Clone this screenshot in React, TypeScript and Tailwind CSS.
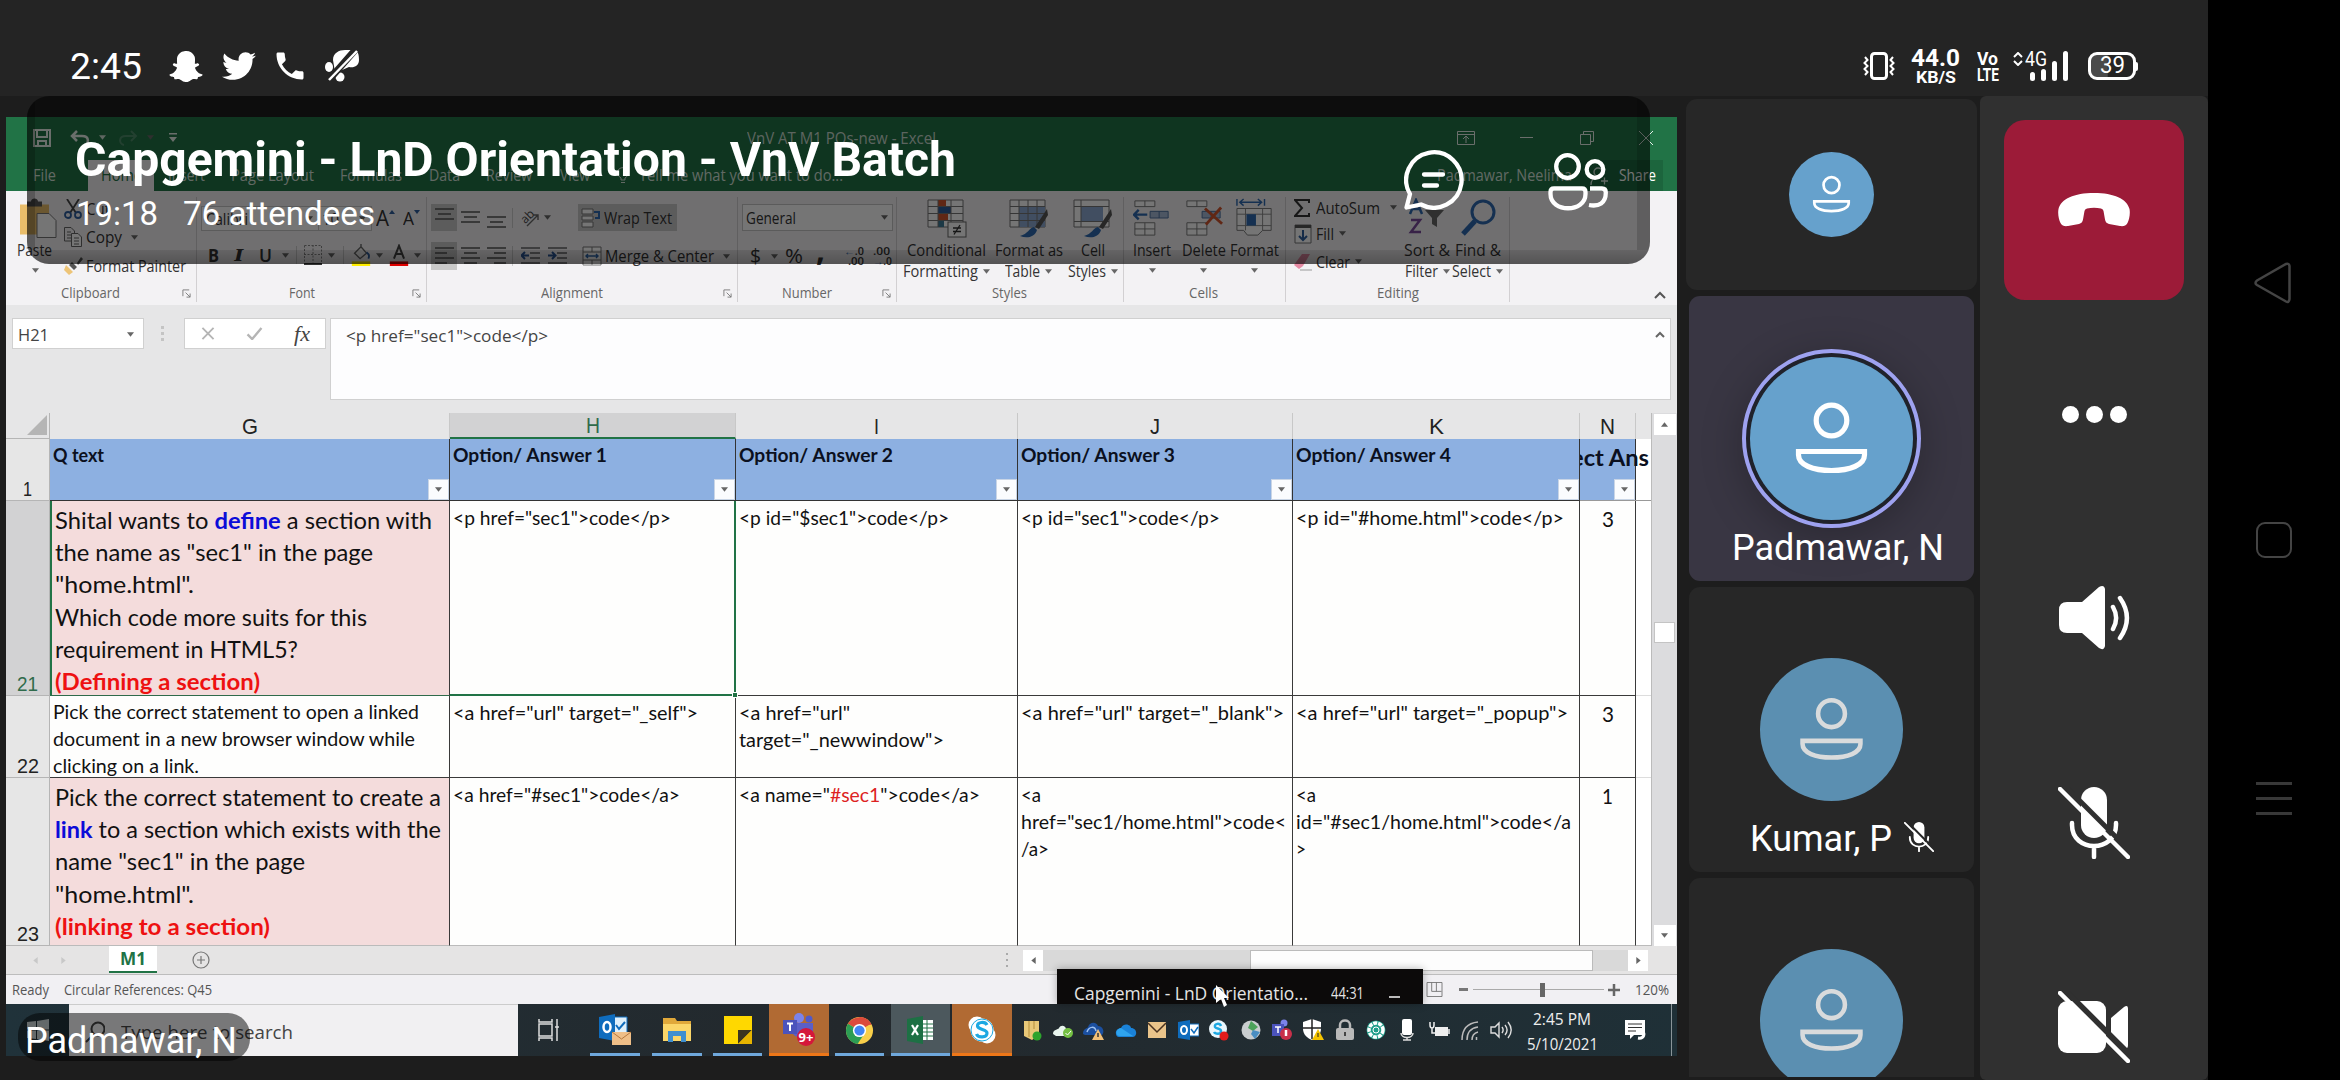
import React, { useLayoutEffect, useRef, useState } from 'react';
import { FaSnapchatGhost, FaTwitter } from 'react-icons/fa';
import { MdPhone } from 'react-icons/md';

type Kids = { children?: React.ReactNode; className?: string };

/* A single line of text stretched horizontally to fill the width of its box. */
function T({ children, className = '' }: Kids) {
  const outer = useRef<HTMLSpanElement>(null);
  const inner = useRef<HTMLSpanElement>(null);
  const [k, setK] = useState(1);
  useLayoutEffect(() => {
    if (outer.current && inner.current) {
      setK(outer.current.clientWidth / inner.current.getBoundingClientRect().width);
    }
  }, []);
  return (
    <span ref={outer} className={'block shrink-0 whitespace-nowrap ' + className}>
      <span ref={inner} className="inline-block origin-left" style={{ transform: `scaleX(${k})` }}>
        {children}
      </span>
    </span>
  );
}

function Caret({ className = '' }: { className?: string }) {
  return (
    <svg viewBox="0 0 8 5" className={'h-[5px] w-[7px] shrink-0 fill-[#666] ' + className}>
      <path d="M0 0H8L4 5Z" />
    </svg>
  );
}

function Launcher({ className = '' }: { className?: string }) {
  return (
    <svg viewBox="0 0 10 10" className={'h-[9px] w-[9px] shrink-0 fill-none stroke-[#777] ' + className}>
      <path d="M1 8V1H8M4 4L9 9M9 5V9H5" />
    </svg>
  );
}

function Group({ children, label, labelClass, className = '', launcher = true }: Kids & { label: string; labelClass: string; launcher?: boolean }) {
  return (
    <div className={'relative flex h-[105px] shrink-0 flex-col border-r border-[#d2d0d2] ' + className}>
      <div className="flex h-[89px]">{children}</div>
      <div className="flex h-[18px] items-center text-[14.500px] leading-[18px] text-[#666]">
        <T className={labelClass}>{label}</T>
        {launcher && <Launcher className="mr-[5px] ml-auto" />}
      </div>
    </div>
  );
}

const iconBase = 'shrink-0 fill-none';

function Lines({ kind, className = '' }: { kind: 'top' | 'mid' | 'bot' | 'left' | 'center' | 'right'; className?: string }) {
  const d = {
    top: 'M0 2H19M3 7H16M0 12H19',
    mid: 'M0 5H19M3 10H16M0 15H19',
    bot: 'M0 10H19M3 15H16M0 20H19',
    left: 'M0 2H19M0 7H12M0 12H19M0 17H12',
    center: 'M0 2H19M3 7H16M0 12H19M3 17H16',
    right: 'M0 2H19M7 7H19M0 12H19M7 17H19',
  }[kind];
  return (
    <svg viewBox="0 0 19 21" className={iconBase + ' h-[21px] w-[19px] stroke-[#555] stroke-[1.4] ' + className}>
      <path d={d} />
    </svg>
  );
}

function Indent({ flip = false, className = '' }: { flip?: boolean; className?: string }) {
  return (
    <svg viewBox="0 0 19 20" className={iconBase + ' h-[20px] w-[19px] ' + className}>
      <path d="M0 2H19M9 7H19M9 12H19M0 17H19" stroke="#666" strokeWidth="1.4" />
      <path d={flip ? 'M0 9.5H7M4 6L7.5 9.5L4 13' : 'M8 9.5H1M4 6L.5 9.5L4 13'} stroke="#2b579a" strokeWidth="2" />
    </svg>
  );
}

function TableIcon({ kind }: { kind: 'cond' | 'table' | 'cell' }) {
  return (
    <svg viewBox="0 0 40 40" className={iconBase + ' h-[40px] w-[40px]'}>
      <path d="M1 2H36V29H1Z" fill="#fff" stroke="#777" />
      {kind === 'cond' && (
        <>
          <rect x="11" y="2" width="8" height="6" fill="#d2562f" />
          <rect x="11" y="9" width="13" height="6" fill="#2f5f9e" />
          <rect x="11" y="16" width="10" height="6" fill="#d2562f" />
          <rect x="11" y="22" width="6" height="7" fill="#3d7d9a" />
          <path d="M1 8.5H36M1 15.5H36M1 22.5H36M11 2V29M24 2V29" stroke="#777" />
          <rect x="21" y="24" width="18" height="15" fill="#fff" stroke="#666" />
          <path d="M26 30H34M26 33.5H34M33 27L27 36.500" stroke="#333" strokeWidth="1.3" />
        </>
      )}
      {kind === 'table' && (
        <>
          <rect x="10" y="9" width="26" height="20" fill="#8fabd3" />
          <path d="M1 8.500H36M1 15.500H36M1 22.500H36M10 2V29M19 2V29M28 2V29" stroke="#777" />
        </>
      )}
      {kind === 'cell' && (
        <>
          <rect x="8" y="9" width="22" height="14" fill="#8fabd3" />
          <path d="M1 8.500H36M8 2V29M1 23.500H36" stroke="#777" />
        </>
      )}
      {kind !== 'cond' && (
        <>
          <path d="M38 11L26 29L30 31L39 17Z" fill="#555" />
          <path d="M25 29C20 30 19 36 11 38C18 41 26 39 28 32Z" fill="#2f6ab0" />
        </>
      )}
    </svg>
  );
}

function CellIcon({ kind }: { kind: 'insert' | 'delete' | 'format' }) {
  return (
    <svg viewBox="0 0 40 40" className={iconBase + ' h-[40px] w-[38px]'}>
      {kind === 'format' ? (
        <>
          <path d="M1 0V7M30 0V7M4 3.500H27M8 0L4 3.500L8 7M23 0L27 3.500L23 7" stroke="#2f6ab0" strokeWidth="1.500" />
          <path d="M1 10H37V33H28L23 38H12L8 33H1Z" fill="#fff" stroke="#777" />
          <path d="M1 16H37M1 28H37M10 10V33M28 10V33" stroke="#888" />
          <rect x="11" y="16" width="10" height="12" fill="#2f6ab0" />
        </>
      ) : (
        <>
          <path d="M2 2H23V8H2ZM12.500 2V8M2 25H23V38H2ZM12.500 25V38M2 31.500H23" fill="#fff" stroke="#777" />
          <path d="M18 13H37V20H18ZM27.500 13V20" fill="#a9bcd8" stroke="#4b6f9f" />
          {kind === 'insert' ? (
            <path d="M15 16.500H1M6 11.500L1 16.500L6 21.500" stroke="#2f6ab0" strokeWidth="2.500" />
          ) : (
            <path d="M21 10L39 26M38 9L22 27" stroke="#d2562f" strokeWidth="3" />
          )}
        </>
      )}
    </svg>
  );
}

function BigButton({ icon, a, b, className, wa, wb }: { icon: React.ReactNode; a: string; b?: string; className: string; wa: string; wb?: string }) {
  return (
    <div className={'flex shrink-0 flex-col items-center pt-[1px] text-[16px] leading-[20px] text-[#333] ' + className}>
      {icon}
      <T className={'mt-[2px] h-[20px] ' + wa}>{a}</T>
      {b ? (
        <div className="flex h-[22px] items-center gap-[5px]">
          <T className={wb}>{b}</T>
          <Caret />
        </div>
      ) : (
        <Caret className="mt-[8px]" />
      )}
    </div>
  );
}

function TitleBar() {
  return (
    <div className="flex h-[37px] items-center bg-[#217346] pt-[4px] text-[16px] text-[#e6efe9]">
      <svg viewBox="0 0 18 18" className={iconBase + ' ml-[27px] h-[18px] w-[18px] stroke-current stroke-2'}>
        <path d="M1 1H17V17H1ZM4 1V8H14V1M5 17V12H13V17" />
      </svg>
      <svg viewBox="0 0 20 16" className={iconBase + ' ml-[19px] h-[16px] w-[20px] stroke-current stroke-[2.500]'}>
        <path d="M7 1L2 6L7 11M2 6H12C20 6 19 14 14 15" />
      </svg>
      <Caret className="ml-[9px] fill-[#cfe0d6]" />
      <svg viewBox="0 0 20 16" className={iconBase + ' ml-[12px] h-[16px] w-[20px] stroke-[#4d8c69] stroke-2'}>
        <path d="M13 1L18 6L13 11M18 6H8C0 6 1 14 6 15" />
      </svg>
      <Caret className="ml-[9px] fill-[#4d8c69]" />
      <svg viewBox="0 0 8 9" className="ml-[15px] h-[9px] w-[8px] shrink-0 fill-current">
        <path d="M0 0H8V1.500H0ZM0 4H8L4 9Z" />
      </svg>
      <T className="ml-[570px] w-[189px] text-[#c9dbd0]">VnV AT M1 PQs-new - Excel</T>
      <svg viewBox="0 0 18 14" className={iconBase + ' ml-[521px] h-[14px] w-[18px] stroke-current'}>
        <path d="M.5 .5H17.500V13.500H.5ZM.5 3.500H17.500M9 12V5M6 8L9 5L12 8" />
      </svg>
      <span className="ml-[45px] h-px w-[13px] bg-current" />
      <svg viewBox="0 0 14 14" className={iconBase + ' ml-[47px] h-[14px] w-[14px] stroke-current'}>
        <path d="M.5 3.500H10.500V13.500H.5ZM3.500 3.500V.5H13.500V10.500H10.500" />
      </svg>
      <svg viewBox="0 0 14 14" className={iconBase + ' ml-[45px] h-[14px] w-[14px] stroke-current'}>
        <path d="M0 0L14 14M14 0L0 14" />
      </svg>
    </div>
  );
}

function MenuTabs() {
  return (
    <div className="flex h-[37px] items-end bg-[#217346] text-[16px] leading-[31px] text-[#d5e4db]">
      <T className="ml-[27px] w-[23px]">File</T>
      <div className="ml-[32px] flex h-[31px] w-[66px] justify-center bg-[#f3f2f4] text-[#217346]">
        <T className="w-[41px]">Home</T>
      </div>
      <T className="ml-[14px] w-[37px]">Insert</T>
      <T className="ml-[26px] w-[83px]">Page Layout</T>
      <T className="ml-[26px] w-[62px]">Formulas</T>
      <T className="ml-[27px] w-[31px]">Data</T>
      <T className="ml-[26px] w-[46px]">Review</T>
      <T className="ml-[28px] w-[30px]">View</T>
      <svg viewBox="0 0 12 18" className={iconBase + ' mb-[6px] ml-[27px] h-[18px] w-[12px] stroke-current'}>
        <path d="M4 13V11C1 9 .5 7 .5 5.500C.5-1 11.500-1 11.500 5.500C11.500 7 11 9 8 11V13ZM4 15.500H8" />
      </svg>
      <T className="ml-[10px] w-[204px]">Tell me what you want to do...</T>
      <T className="ml-[594px] w-[135px]">Padmawar, Neelima</T>
      <div className="ml-[8px] flex h-[31px] w-[83px] items-center bg-[#1c653d]">
        <svg viewBox="0 0 20 18" className={iconBase + ' ml-[9px] h-[18px] w-[20px] stroke-current stroke-[1.300]'}>
          <circle cx="9" cy="5" r="4" />
          <path d="M2 18C2 13 5 10 9 10M12 14H19M15.500 10.500V17.500" />
        </svg>
        <T className="ml-[10px] w-[37px] text-white">Share</T>
      </div>
    </div>
  );
}

function Ribbon() {
  return (
    <div className="flex h-[114px] items-start bg-[#f3f2f4] pt-[6px] text-[16px] text-[#333]">
      <Group label="Clipboard" labelClass="ml-[55px] w-[59px]" className="w-[191px]">
        <div className="flex w-[58px] flex-col items-center">
          <svg viewBox="0 0 37 40" className={iconBase + ' mt-[1px] ml-[6px] h-[41px] w-[37px]'}>
            <path d="M0 6H29V36H0Z" fill="#e9bd6a" />
            <path d="M7 3H11C11-1 18-1 18 3H22V8H7Z" fill="#555" />
            <path d="M17 15H29L36 22V39H17Z" fill="#fff" stroke="#777" />
          </svg>
          <T className="mt-[1px] ml-[-1px] w-[35px] leading-[20px]">Paste</T>
          <Caret className="mt-[8px]" />
        </div>
        <div className="flex flex-col">
          <div className="flex h-[24px] items-center">
            <svg viewBox="0 0 18 20" className={iconBase + ' h-[20px] w-[18px] stroke-[#444] stroke-[1.800]'}>
              <path d="M3 0L12 14M15 0L6 14" />
              <circle cx="4" cy="16" r="3" stroke="#2f5f9e" />
              <circle cx="14" cy="16" r="3" stroke="#2f5f9e" />
            </svg>
            <T className="ml-[4px] w-[24px]">Cut</T>
          </div>
          <div className="flex h-[32px] items-center">
            <svg viewBox="0 0 18 20" className={iconBase + ' h-[20px] w-[18px] stroke-[#666]'}>
              <path d="M.5 .5H7L10.500 4V14H.5ZM3 5H7M3 8H7M3 11H7" />
              <path d="M7.500 6.500H14L17.500 10V19.500H7.500ZM10 11H15M10 14H15M10 17H15" fill="#fff" />
            </svg>
            <T className="ml-[4px] w-[36px]">Copy</T>
            <Caret className="ml-[9px]" />
          </div>
          <div className="flex h-[26px] items-center">
            <svg viewBox="0 0 19 18" className={iconBase + ' h-[18px] w-[19px]'}>
              <path d="M2 8L9 15L5 18L0 13Z" fill="#edc477" />
              <path d="M8 5L13 10L10 13L5 8ZM13 6L17 0L19 2L14 8Z" fill="#555" />
            </svg>
            <T className="ml-[3px] w-[100px]">Format Painter</T>
          </div>
        </div>
      </Group>

      <Group label="Font" labelClass="ml-[92px] w-[26px]" className="w-[230px]">
        <div className="flex flex-col pt-[9px] pl-[4px]">
          <div className="flex h-[25px] items-center">
            <div className="flex h-[25px] w-[118px] items-center border border-[#c6c6c6] bg-white pr-[5px] pl-[4px]">
              <T className="w-[42px]">Calibri</T>
              <Caret className="ml-auto" />
            </div>
            <div className="flex h-[25px] w-[53px] items-center border border-l-0 border-[#c6c6c6] bg-white pr-[5px] pl-[3px]">
              <T className="w-[17px]">10</T>
              <Caret className="ml-auto" />
            </div>
            <T className="ml-[4px] w-[13px] text-[21px]">A</T>
            <svg viewBox="0 0 6 4" className="mb-[14px] h-[4px] w-[6px] fill-[#2f5f9e]"><path d="M0 4H6L3 0Z" /></svg>
            <T className="ml-[8px] w-[11px] text-[18px]">A</T>
            <svg viewBox="0 0 6 4" className="mb-[14px] h-[4px] w-[6px] fill-[#2f5f9e]"><path d="M0 0H6L3 4Z" /></svg>
          </div>
          <div className="mt-[10px] flex h-[28px] items-center pl-[7px] text-[18px]">
            <T className="w-[11px] font-bold">B</T>
            <T className="ml-[15px] w-[9px] font-serif font-bold italic">I</T>
            <T className="ml-[16px] w-[13px] font-semibold underline">U</T>
            <Caret className="ml-[10px]" />
            <span className="ml-[7px] h-[18px] w-px bg-[#ccc]" />
            <svg viewBox="0 0 18 20" className={iconBase + ' ml-[7px] h-[20px] w-[18px]'}>
              <path d="M.5 .5H17.500V18M.5 .5V18M9 0V18M0 9.500H18" stroke="#888" strokeDasharray="2 1.500" />
              <path d="M0 19H18" stroke="#333" strokeWidth="2" />
            </svg>
            <Caret className="ml-[6px]" />
            <span className="ml-[8px] h-[18px] w-px bg-[#ccc]" />
            <svg viewBox="0 0 20 24" className={iconBase + ' ml-[7px] h-[22px] w-[20px]'}>
              <path d="M3 10L10 3L16 10L9 16ZM10 3V0" stroke="#666" strokeWidth="1.500" fill="#eee" />
              <path d="M16 9C19 11 19 14 18 16" stroke="#2f5f9e" strokeWidth="2" />
              <path d="M0 19H20V24H0Z" fill="#ffee00" />
            </svg>
            <Caret className="ml-[5px]" />
            <svg viewBox="0 0 20 24" className={iconBase + ' ml-[6px] h-[22px] w-[20px]'}>
              <path d="M4.500 16L10 2L15.500 16M7 11H13" stroke="#444" strokeWidth="2.200" />
              <path d="M0 19H20V24H0Z" fill="#e00000" />
            </svg>
            <Caret className="ml-[5px]" />
          </div>
        </div>
      </Group>

      <Group label="Alignment" labelClass="ml-[114px] w-[62px]" className="w-[311px]">
        <div className="flex flex-col pt-[7px] pl-[4px]">
          <div className="flex h-[27px] items-center">
            <div className="flex h-[27px] w-[26px] items-center justify-center bg-[#c9c9c9]"><Lines kind="top" /></div>
            <Lines kind="mid" className="ml-[4px]" />
            <Lines kind="bot" className="ml-[7px]" />
            <span className="ml-[6px] h-[20px] w-px bg-[#ccc]" />
            <svg viewBox="0 0 20 20" className={iconBase + ' ml-[7px] h-[20px] w-[20px]'}>
              <text x="1" y="14" transform="rotate(-45 6 10)" className="fill-[#444] text-[12px]">ab</text>
              <path d="M7 18L18 7M13 7H18V12" stroke="#666" strokeWidth="1.400" />
            </svg>
            <Caret className="ml-[4px]" />
            <div className="ml-[27px] flex h-[27px] w-[99px] items-center bg-[#c9c9c9]">
              <svg viewBox="0 0 20 20" className={iconBase + ' ml-[3px] h-[20px] w-[20px]'}>
                <path d="M1 1H12V6H1ZM1 8H12V12H1ZM1 14H12V19H1Z" fill="#fff" stroke="#777" />
                <path d="M13 4H18V10H14" stroke="#2f6ab0" strokeWidth="2" />
              </svg>
              <T className="ml-[3px] w-[68px]">Wrap Text</T>
            </div>
          </div>
          <div className="mt-[11px] flex h-[28px] items-center">
            <div className="flex h-[28px] w-[26px] items-center justify-center bg-[#c9c9c9]"><Lines kind="left" /></div>
            <Lines kind="center" className="ml-[4px]" />
            <Lines kind="right" className="ml-[7px]" />
            <span className="ml-[6px] h-[20px] w-px bg-[#ccc]" />
            <Indent className="ml-[8px]" />
            <Indent flip className="ml-[8px]" />
            <svg viewBox="0 0 20 20" className={iconBase + ' ml-[15px] h-[20px] w-[20px]'}>
              <path d="M1 1H19V19H1ZM1 6H19M1 14H19M10 1V6M10 14V19" stroke="#777" fill="#fff" />
              <path d="M4 10H16M6 8L4 10L6 12M14 8L16 10L14 12" stroke="#2f6ab0" strokeWidth="1.400" />
            </svg>
            <T className="ml-[3px] w-[109px]">Merge &amp; Center</T>
            <Caret className="ml-[9px]" />
          </div>
        </div>
      </Group>

      <Group label="Number" labelClass="ml-[44px] w-[50px]" className="w-[159px]">
        <div className="flex flex-col pt-[7px] pl-[4px]">
          <div className="flex h-[27px] w-[151px] items-center border border-[#c6c6c6] bg-white pr-[4px] pl-[3px]">
            <T className="w-[50px]">General</T>
            <Caret className="ml-auto" />
          </div>
          <div className="mt-[11px] flex h-[28px] items-center pl-[8px] text-[20px]">
            <T className="w-[11px]">$</T>
            <Caret className="ml-[10px]" />
            <T className="ml-[7px] w-[18px]">%</T>
            <T className="mt-[-12px] ml-[13px] w-[9px] text-[30px] leading-[28px] font-bold">,</T>
            <div className="ml-[19px] flex flex-col text-[10px] leading-[10px] font-semibold">
              <T className="w-[20px]"><b className="text-[#2f6ab0]">←</b>.0</T>
              <T className="ml-[4px] w-[16px]">.00</T>
            </div>
            <div className="ml-[9px] flex flex-col text-[10px] leading-[10px] font-semibold">
              <T className="w-[17px]">.00</T>
              <T className="w-[19px]"><b className="text-[#2f6ab0]">→</b>.0</T>
            </div>
          </div>
        </div>
      </Group>

      <Group label="Styles" labelClass="ml-[95px] w-[35px]" className="w-[227px]" launcher={false}>
        <BigButton className="ml-[6px] w-[87px]" icon={<TableIcon kind="cond" />} a="Conditional" wa="w-[79px]" b="Formatting" wb="w-[75px]" />
        <BigButton className="ml-[4px] w-[69px]" icon={<TableIcon kind="table" />} a="Format as" wa="w-[68px]" b="Table" wb="w-[35px]" />
        <BigButton className="ml-[4px] w-[51px]" icon={<TableIcon kind="cell" />} a="Cell" wa="w-[24px]" b="Styles" wb="w-[38px]" />
      </Group>

      <Group label="Cells" labelClass="ml-[65px] w-[29px]" className="w-[162px]" launcher={false}>
        <BigButton className="ml-[9px] w-[38px]" icon={<CellIcon kind="insert" />} a="Insert" wa="w-[38px]" />
        <BigButton className="ml-[10px] w-[45px]" icon={<CellIcon kind="delete" />} a="Delete" wa="w-[44px]" />
        <BigButton className="ml-[4px] w-[49px]" icon={<CellIcon kind="format" />} a="Format" wa="w-[49px]" />
      </Group>

      <Group label="Editing" labelClass="ml-[91px] w-[42px]" className="w-[224px]" launcher={false}>
        <div className="flex w-[110px] flex-col pl-[8px]">
          <div className="flex h-[21px] items-center">
            <svg viewBox="0 0 16 18" className={iconBase + ' h-[18px] w-[16px] stroke-[#333] stroke-2'}><path d="M15 4V1H1L8 9L1 17H15V14" /></svg>
            <T className="ml-[6px] w-[64px]">AutoSum</T>
            <Caret className="ml-[10px]" />
          </div>
          <div className="flex h-[31px] items-center">
            <svg viewBox="0 0 18 20" className={iconBase + ' h-[20px] w-[18px]'}>
              <path d="M1 1H17V19H1Z" fill="#fff" stroke="#777" /><path d="M1 2.500H17" stroke="#555" strokeWidth="3" />
              <path d="M9 6V16M5 12L9 16L13 12" stroke="#2f5f9e" strokeWidth="2" />
            </svg>
            <T className="ml-[4px] w-[18px]">Fill</T>
            <Caret className="ml-[5px]" />
          </div>
          <div className="flex h-[25px] items-center">
            <svg viewBox="0 0 18 18" className={iconBase + ' h-[18px] w-[18px]'}>
              <path d="M8 1H16L9 13L5 16L0 12Z" fill="#e58aa3" /><path d="M6 17H18" stroke="#999" />
            </svg>
            <T className="ml-[4px] w-[34px]">Clear</T>
            <Caret className="ml-[5px]" />
          </div>
        </div>
        <BigButton
          className="ml-[7px] w-[48px]" a="Sort &" wa="w-[46px]" b="Filter" wb="w-[33px]"
          icon={
            <svg viewBox="0 0 38 40" className={iconBase + ' h-[40px] w-[38px]'}>
              <path d="M2 16L8 2L14 16M4 11H12" stroke="#2f6ab0" strokeWidth="2.500" />
              <path d="M3 22H12L3 34H13" stroke="#7a4a9c" strokeWidth="2.500" />
              <path d="M17 12H36L29 20V29L24 26V20Z" fill="#666" />
            </svg>
          }
        />
        <BigButton
          className="ml-[1px] w-[51px]" a="Find &" wa="w-[46px]" b="Select" wb="w-[39px]"
          icon={
            <svg viewBox="0 0 38 40" className={iconBase + ' h-[40px] w-[38px] stroke-[#2f6ab0]'}>
              <circle cx="24" cy="14" r="11" strokeWidth="3" /><path d="M16 23L4 36" strokeWidth="5" />
            </svg>
          }
        />
      </Group>
      <svg viewBox="0 0 12 8" className={iconBase + ' mt-[94px] ml-[144px] h-[8px] w-[12px] stroke-[#555] stroke-2'}><path d="M1 7L6 2L11 7" /></svg>
    </div>
  );
}

function FormulaBar() {
  return (
    <div className="flex h-[108px] items-start bg-[#e6e6e7] pt-[13px] pl-[6px] text-[17px] text-[#444]">
      <div className="flex h-[31px] w-[132px] items-center border border-[#d0d0d0] bg-white pt-[2px] pr-[9px] pl-[5px]">
        <T className="w-[31px]">H21</T>
        <Caret className="ml-auto" />
      </div>
      <div className="ml-[17px] flex h-[31px] w-[3px] flex-col justify-center gap-[3px]">
        <span className="h-[3px] bg-[#c4c4c4]" /><span className="h-[3px] bg-[#c4c4c4]" /><span className="h-[3px] bg-[#c4c4c4]" />
      </div>
      <div className="ml-[20px] flex h-[31px] w-[142px] items-center border border-[#d0d0d0] bg-white pl-[16px]">
        <svg viewBox="0 0 14 14" className={iconBase + ' h-[13px] w-[14px] stroke-[#b5b5b5] stroke-2'}><path d="M1 1L13 13M13 1L1 13" /></svg>
        <svg viewBox="0 0 17 14" className={iconBase + ' ml-[31px] h-[13px] w-[17px] stroke-[#b5b5b5] stroke-[2.500]'}><path d="M1 8L6 13L16 1" /></svg>
        <T className="ml-[31px] w-[16px] font-['Liberation_Serif'] text-[21px] leading-[24px] italic">fx</T>
      </div>
      <div className="ml-[4px] flex h-[82px] w-[1341px] items-start border border-[#d0d0d0] bg-[#fdfdfe] pl-[15px]">
        <T className="w-[202px] leading-[33px]">&lt;p href="sec1"&gt;code&lt;/p&gt;</T>
        <svg viewBox="0 0 10 7" className={iconBase + ' mt-[12px] ml-[1107px] h-[7px] w-[10px] stroke-[#666] stroke-2'}><path d="M1 6L5 2L9 6" /></svg>
      </div>
    </div>
  );
}

function HeadCell({ children, className = '' }: Kids) {
  return (
    <div className={'flex h-[62px] shrink-0 flex-col justify-between border-r border-b border-[#333] bg-[#8db0e1] pt-[2px] pl-[3px] text-[19px] leading-[28px] font-bold text-[#0b1020] ' + className}>
      {children}
      <div className="flex h-[21px] w-[21px] items-center justify-center self-end border border-[#c9d5e6] bg-[#fbfcfe]"><Caret className="fill-[#555]" /></div>
    </div>
  );
}

function Cell({ children, className = '' }: Kids) {
  return (
    <div className={'shrink-0 overflow-hidden border-r border-b border-[#3a3a3a] bg-[#fefefd] pt-[3px] pl-[3px] text-[19px] leading-[27px] text-[#111] ' + className}>{children}</div>
  );
}

function RowNum({ children, className = '' }: Kids) {
  return (
    <div className={"flex w-[44px] shrink-0 items-end justify-center border-r border-b border-[#b5b5b5] bg-[#e6e6e6] font-['Liberation_Sans'] text-[21px] leading-[22px] text-[#222] " + className}>{children}</div>
  );
}

function Sheet() {
  const col = "flex h-[26px] shrink-0 items-center justify-center border-r border-[#c8c8c8] font-['Liberation_Sans'] text-[22px] text-[#222]";
  return (
    <div className="flex h-[533px] bg-[#e6e6e7] font-[Lato]">
      <div className="flex w-[1645px] flex-col">
        <div className="flex h-[26px]">
          <div className="flex w-[44px] items-end justify-end border-r border-b border-[#b5b5b5] pr-[2px] pb-[3px]">
            <svg viewBox="0 0 20 20" className="h-[20px] w-[20px] fill-[#b5b5b5]"><path d="M20 0V20H0Z" /></svg>
          </div>
          <div className={col + ' w-[400px]'}><T className="w-[16px]">G</T></div>
          <div className={col + ' w-[286px] border-b-2 border-b-[#217346] bg-[#d2d2d3] !text-[#2f6b4b]'}><T className="w-[14px]">H</T></div>
          <div className={col + ' w-[282px]'}><T className="w-[5px]">I</T></div>
          <div className={col + ' w-[275px]'}><T className="w-[10px]">J</T></div>
          <div className={col + ' w-[287px]'}><T className="w-[15px]">K</T></div>
          <div className={col + ' w-[56px]'}><T className="w-[15px]">N</T></div>
        </div>

        <div className="flex h-[62px]">
          <RowNum><T className="w-[9px]">1</T></RowNum>
          <HeadCell className="w-[400px]"><T className="w-[51px]">Q text</T></HeadCell>
          <HeadCell className="w-[286px]"><T className="w-[154px]">Option/ Answer 1</T></HeadCell>
          <HeadCell className="w-[282px]"><T className="w-[154px]">Option/ Answer 2</T></HeadCell>
          <HeadCell className="w-[275px]"><T className="w-[154px]">Option/ Answer 3</T></HeadCell>
          <HeadCell className="w-[287px]"><T className="w-[155px]">Option/ Answer 4</T></HeadCell>
          <div className="relative flex w-[71px] overflow-hidden border-b border-[#999] bg-white">
            <HeadCell className="w-[56px] justify-end" />
            <T className="absolute top-[2px] left-[-9px] w-[78px] text-[22px] leading-[34px] font-bold text-[#0b1020]">ect Ans</T>
          </div>
        </div>

        <div className="flex h-[195px]">
          <RowNum className="!bg-[#d2d2d3] !text-[#2f6b4b]"><T className="w-[21px]">21</T></RowNum>
          <Cell className="w-[400px] border-l-2 border-l-[#217346] !border-b-[#2f6b4b] !bg-[#f4dcdc] !pl-[3px] !text-[23px] !leading-[32.200px]">
            <T className="w-[377px]">Shital wants to <b className="text-[#0c0cd8]">define</b> a section with</T>
            <T className="w-[318px]">the name as "sec1" in the page</T>
            <T className="w-[139px]">"home.html".</T>
            <T className="w-[312px]">Which code more suits for this</T>
            <T className="w-[243px]">requirement in HTML5?</T>
            <T className="w-[205px] font-bold text-[#ee1111]">(Defining a section)</T>
          </Cell>
          <Cell className="relative w-[286px] !overflow-visible !border-r-2 !border-b-2 !border-[#217346]">
            <T className="w-[218px]">&lt;p href="sec1"&gt;code&lt;/p&gt;</T>
            <span className="absolute right-[-4px] bottom-[-4px] h-[6px] w-[6px] border border-white bg-[#217346]" />
          </Cell>
          <Cell className="w-[282px]"><T className="w-[210px]">&lt;p id="$sec1"&gt;code&lt;/p&gt;</T></Cell>
          <Cell className="w-[275px]"><T className="w-[199px]">&lt;p id="sec1"&gt;code&lt;/p&gt;</T></Cell>
          <Cell className="w-[287px]"><T className="w-[268px]">&lt;p id="#home.html"&gt;code&lt;/p&gt;</T></Cell>
          <Cell className="flex w-[56px] justify-center !pt-[4px] !pl-0 !text-[22px]"><T className="w-[12px]">3</T></Cell>
          <div className="w-[15px] border-b border-[#ddd] bg-white" />
        </div>

        <div className="flex h-[82px]">
          <RowNum><T className="w-[22px]">22</T></RowNum>
          <Cell className="w-[400px] !pt-[2px]">
            <T className="w-[366px]">Pick the correct statement to open a linked</T>
            <T className="w-[362px]">document in a new browser window while</T>
            <T className="w-[146px]">clicking on a link.</T>
          </Cell>
          <Cell className="w-[286px]"><T className="w-[245px]">&lt;a href="url" target="_self"&gt;</T></Cell>
          <Cell className="w-[282px]"><T className="w-[111px]">&lt;a href="url"</T><T className="w-[205px]">target="_newwindow"&gt;</T></Cell>
          <Cell className="w-[275px]"><T className="w-[263px]">&lt;a href="url" target="_blank"&gt;</T></Cell>
          <Cell className="w-[287px]"><T className="w-[272px]">&lt;a href="url" target="_popup"&gt;</T></Cell>
          <Cell className="flex w-[56px] justify-center !pt-[4px] !pl-0 !text-[22px]"><T className="w-[12px]">3</T></Cell>
          <div className="w-[15px] border-b border-[#ddd] bg-white" />
        </div>

        <div className="flex h-[168px]">
          <RowNum><T className="w-[22px]">23</T></RowNum>
          <Cell className="w-[400px] !border-b-[#bbb] !bg-[#f4dcdc] !pt-[3px] !pl-[5px] !text-[23px] !leading-[32.200px]">
            <T className="w-[386px]">Pick the correct statement to create a</T>
            <T className="w-[386px]"><b className="text-[#0c0cd8]">link</b> to a section which exists with the</T>
            <T className="w-[250px]">name "sec1" in the page</T>
            <T className="w-[139px]">"home.html".</T>
            <T className="w-[215px] font-bold text-[#ee1111]">(linking to a section)</T>
          </Cell>
          <Cell className="w-[286px] !border-b-[#bbb]"><T className="w-[227px]">&lt;a href="#sec1"&gt;code&lt;/a&gt;</T></Cell>
          <Cell className="w-[282px] !border-b-[#bbb]"><T className="w-[241px]">&lt;a name="<span className="text-[#dd2222]">#sec1</span>"&gt;code&lt;/a&gt;</T></Cell>
          <Cell className="w-[275px] !border-b-[#bbb]"><T className="w-[20px]">&lt;a</T><T className="w-[265px]">href="sec1/home.html"&gt;code&lt;</T><T className="w-[28px]">/a&gt;</T></Cell>
          <Cell className="w-[287px] !border-b-[#bbb]"><T className="w-[20px]">&lt;a</T><T className="w-[275px]">id="#sec1/home.html"&gt;code&lt;/a</T><T className="w-[10px]">&gt;</T></Cell>
          <Cell className="flex w-[56px] justify-center !border-b-[#bbb] !pt-[4px] !pl-0 !text-[22px]"><T className="w-[11px]">1</T></Cell>
          <div className="w-[15px] border-b border-[#bbb] bg-white" />
        </div>
      </div>
      <div className="flex w-[26px] flex-col border-l border-[#bbb] bg-[#dcdcde]">
        <div className="mt-[1px] flex h-[21px] w-[22px] items-center justify-center self-center bg-white"><Caret className="rotate-180" /></div>
        <div className="mt-[187px] h-[21px] w-[21px] self-center border border-[#c4c4c4] bg-white" />
        <div className="mt-auto flex h-[21px] w-[22px] items-center justify-center self-center bg-white"><Caret /></div>
      </div>
    </div>
  );
}

function SheetTabs() {
  return (
    <div className="flex h-[29px] items-center border-b border-[#bdbdbd] bg-[#e5e4e4]">
      <Caret className="ml-[26px] rotate-90 fill-[#c8c8c8]" />
      <Caret className="ml-[21px] -rotate-90 fill-[#c8c8c8]" />
      <div className="ml-[42px] flex h-[27px] w-[48px] items-center justify-center self-start border-b-2 border-[#217346] bg-white text-[18px] font-bold text-[#217346]"><T className="w-[26px]">M1</T></div>
      <svg viewBox="0 0 18 18" className={iconBase + ' ml-[35px] h-[18px] w-[18px] stroke-[#777] stroke-[1.200]'}><circle cx="9" cy="9" r="8" /><path d="M9 5V13M5 9H13" /></svg>
      <div className="ml-[796px] flex w-[2px] flex-col gap-[4px]"><span className="h-[2px] bg-[#aaa]" /><span className="h-[2px] bg-[#aaa]" /><span className="h-[2px] bg-[#aaa]" /></div>
      <div className="ml-[15px] flex h-[21px] w-[625px] items-center bg-[#d9d9d9]">
        <div className="flex h-[21px] w-[20px] items-center justify-center bg-white"><Caret className="rotate-90" /></div>
        <div className="ml-[207px] h-[21px] w-[343px] border border-[#bbb] bg-[#fdfdfd]" />
        <div className="ml-auto flex h-[21px] w-[20px] items-center justify-center bg-white"><Caret className="-rotate-90" /></div>
      </div>
    </div>
  );
}

function StatusLine() {
  return (
    <div className="flex h-[29px] items-center bg-[#f1f0f3] pl-[6px] text-[15px] text-[#555]">
      <T className="w-[37px]">Ready</T>
      <T className="ml-[15px] w-[148px]">Circular References: Q45</T>
      <svg viewBox="0 0 17 16" className={iconBase + ' ml-[1214px] h-[15px] w-[17px] stroke-[#777]'}><path d="M.5 .5H16.500V15.500H.5ZM5.500 0V10H16M10.500 0V10" /></svg>
      <span className="ml-[16px] h-[3px] w-[9px] bg-[#777]" />
      <span className="ml-[5px] h-px w-[67px] bg-[#aaa]" />
      <span className="h-[14px] w-[5px] bg-[#666]" />
      <span className="h-px w-[59px] bg-[#aaa]" />
      <svg viewBox="0 0 12 12" className={iconBase + ' ml-[4px] h-[12px] w-[12px] stroke-[#666] stroke-[2.500]'}><path d="M6 0V12M0 6H12" /></svg>
      <T className="ml-[15px] w-[34px]">120%</T>
    </div>
  );
}

function TaskApp({ children, className = '', bar = 'bg-[#6fa8dc]' }: Kids & { bar?: string }) {
  return (
    <div className={'flex h-[52px] shrink-0 flex-col items-center justify-end ' + className}>
      <div className="flex flex-1 items-center pt-[3px]">{children}</div>
      <span className={'h-[3px] w-full ' + bar} />
    </div>
  );
}

function Tray() {
  const s = 'h-[22px] w-[22px] fill-none';
  const items = [
    <svg key="a" viewBox="0 0 22 22" className={s}><path d="M3 2H18V16L11 21L3 17Z" fill="#e8c878" /><path d="M8 2V18M13 2V10" stroke="#b48d3a" /><circle cx="16" cy="17" r="4.500" fill="#2da32d" /></svg>,
    <svg key="b" viewBox="0 0 22 22" className={s}><path d="M1 15C1 10 6 11 7 9C9 5 14 7 14 10C19 10 21 15 17 17H4Z" fill="#e9f5ee" /><circle cx="16" cy="14" r="5" fill="#74c043" /><path d="M13.500 14L15.500 16L19 12" stroke="#fff" /></svg>,
    <svg key="c" viewBox="0 0 22 22" className={s}><path d="M0 15C0 9 4 10 5 8C7 2 14 3 15 7C20 7 22 13 19 16H2Z" fill="#1b4fa0" /><path d="M4 13C6 7 12 7 13 12" stroke="#9dc0f0" strokeWidth="1.500" /><path d="M15 10L21 21H9Z" fill="#f2c078" /><path d="M15 14V18" stroke="#333" strokeWidth="1.500" /></svg>,
    <svg key="d" viewBox="0 0 22 22" className={s}><path d="M1 15C0 11 4 9 6 9C9 3 16 6 16 9C22 9 23 17 18 18H4C2 18 1 16 1 15Z" fill="#1a82d8" /><path d="M6 9L18 17H5C0 17 0 10 6 9Z" fill="#2fa4ee" /></svg>,
    <svg key="e" viewBox="0 0 22 22" className={s}><path d="M2 3H20V19H2Z" fill="#eac48a" /><path d="M2 4L11 13L20 4" stroke="#4a3320" strokeWidth="1.500" /></svg>,
    <svg key="f" viewBox="0 0 22 22" className={s}><path d="M12 5H22V17H12Z" fill="#fff" stroke="#0f6cbd" /><path d="M14 10L17 14L21 8" stroke="#0f6cbd" strokeWidth="1.500" /><path d="M1 3L13 1V21L1 19Z" fill="#0f6cbd" /><ellipse cx="7" cy="11" rx="3" ry="4" stroke="#fff" strokeWidth="2" /></svg>,
    <svg key="g" viewBox="0 0 22 22" className={s}><circle cx="10" cy="10" r="9" fill="#eaf7fd" /><path d="M13 7C12 4 6 4 7 8C8 10 13 9 13 12C13 16 7 15 6 13" stroke="#1da8e2" strokeWidth="2.500" /><circle cx="16" cy="17" r="4.500" fill="#e11b1b" /></svg>,
    <svg key="h" viewBox="0 0 22 22" className={s}><circle cx="11" cy="11" r="9.500" fill="#c9cdcf" /><path d="M11 2L18 8L13 12L8 9Z" fill="#4ca35a" /><path d="M13 11L20 13L15 20L11 15Z" fill="#4a8ec2" /></svg>,
    <svg key="i" viewBox="0 0 22 22" className={s}><circle cx="13" cy="4" r="3.500" fill="#7b83eb" /><path d="M1 5H13V17H1Z" fill="#4b53bc" /><path d="M4 8H10M7 8V14" stroke="#fff" strokeWidth="1.500" /><circle cx="15" cy="15" r="6" fill="#c8304a" /><path d="M15 11V17" stroke="#fff" strokeWidth="2.500" /></svg>,
    <svg key="j" viewBox="0 0 22 22" className={s}><path d="M10 0L19 3V10C19 15 15 19 10 21C5 19 1 15 1 10V3Z" fill="#fff" /><path d="M10 0V20M1 9H19" stroke="#222" strokeWidth="1.500" /><path d="M16 10L22 21H10Z" fill="#f5c400" /><path d="M16 14V18" stroke="#222" /></svg>,
    <svg key="k" viewBox="0 0 22 22" className={s}><path d="M6 10V6C6 0 16 0 16 6V10" stroke="#b9b9b9" strokeWidth="2.500" /><rect x="2" y="9" width="18" height="12" rx="2" fill="#b9b9b9" /><path d="M11 13V17" stroke="#444" strokeWidth="2" /></svg>,
    <svg key="l" viewBox="0 0 22 22" className={s}><circle cx="11" cy="11" r="9.500" fill="#1f9e8a" /><circle cx="11" cy="11" r="7" stroke="#fff" strokeWidth="3.500" strokeDasharray="4 1" /><circle cx="11" cy="11" r="3" fill="#1f9e8a" stroke="#fff" /></svg>,
    <svg key="m" viewBox="0 0 22 22" className={s}><rect x="6" y="0" width="10" height="16" rx="2" fill="#fff" /><path d="M5 14C5 20 17 20 17 14M11 18V21M7 21H15" stroke="#ddd" strokeWidth="1.500" /></svg>,
    <svg key="n" viewBox="0 0 22 22" className={s}><path d="M7 8H20V17H7Z" fill="#eee" /><path d="M21 10V15M2 3V6C2 10 6 10 6 6V3M4 9V14H7" stroke="#eee" strokeWidth="1.500" /></svg>,
    <svg key="o" viewBox="0 0 22 22" className={s}><path d="M3 21C3 10 9 4 19 3M8 21C8 13 12 9 19 8M13 21C13 16 15 14 19 13M17.500 18V21" stroke="#bbb" strokeWidth="1.500" /></svg>,
    <svg key="p" viewBox="0 0 22 22" className={s}><path d="M1 8H5L9 4V18L5 14H1ZM12 8C13.500 10 13.500 12 12 14M15 6C17.500 9 17.500 13 15 16M18 3C22 8 22 14 18 19" stroke="#ddd" strokeWidth="1.400" /></svg>,
  ];
  return (
    <div className="flex items-center">
      {items.map((n, i) => (
        <span key={i} className="flex w-[31.300px] justify-center">{n}</span>
      ))}
    </div>
  );
}

function Taskbar() {
  return (
    <div className="flex h-[52px] items-center bg-gradient-to-r from-[#20323a] via-[#23282c] to-[#1f3037] text-white">
      <div className="flex h-[52px] w-[63px] items-center justify-center">
        <svg viewBox="0 0 22 22" className="h-[22px] w-[22px] fill-[#c9d2d5]"><path d="M0 3L9 2V10.500H0ZM10 2L22 0V10.500H10ZM0 11.500H9V20L0 19ZM10 11.500H22V22L10 20Z" /></svg>
      </div>
      <div className="flex h-[52px] w-[449px] items-center border-t border-[#ccc] bg-[#f1f0f2] pt-[3px] text-[19px] text-[#444]">
        <svg viewBox="0 0 20 22" className={iconBase + ' ml-[16px] h-[22px] w-[20px] stroke-[#444] stroke-2'}><circle cx="13" cy="8" r="6.500" /><path d="M9 13L1 21" /></svg>
        <T className="ml-[16px] w-[172px]">Type here to search</T>
      </div>
      <svg viewBox="0 0 22 22" className={iconBase + ' ml-[20px] h-[22px] w-[22px] stroke-[#ddd] stroke-[1.500]'}><path d="M1 5H14V17H1ZM1 0V3H14V0M1 22V19H14V22M19 0V22M17 8H21" /></svg>
      <TaskApp className="ml-[30px] w-[50px]">
        <svg viewBox="0 0 34 32" className="h-[32px] w-[34px] fill-none">
          <path d="M13 3H29V22H13Z" fill="#dff0fb" stroke="#0f6cbd" /><path d="M18 11L21 15L27 8" stroke="#0f6cbd" strokeWidth="2" /><path d="M1 3L17 0V27L1 24Z" fill="#0f6cbd" /><ellipse cx="9" cy="13" rx="3.500" ry="5" stroke="#fff" strokeWidth="2.500" />
          <path d="M14 18H33V31H14Z" fill="#efbf88" /><path d="M14 18L23.500 25L33 18" stroke="#b6783c" />
        </svg>
      </TaskApp>
      <TaskApp className="ml-[12px] w-[50px]">
        <svg viewBox="0 0 28 26" className="h-[26px] w-[28px]"><path d="M0 1H12L14 4H28V24H0Z" fill="#e0a83a" /><path d="M0 7H28V24H0Z" fill="#fbd669" /><path d="M5 14H23V25H18V19H10V25H5Z" fill="#3f8fd0" /></svg>
      </TaskApp>
      <TaskApp className="ml-[11px] w-[49px]">
        <svg viewBox="0 0 28 28" className="h-[28px] w-[28px]"><path d="M0 0H28V15L15 28H0Z" fill="#ffd800" /><path d="M28 14L14 28V14Z" fill="#3b3420" /><path d="M28 14V28H14Z" fill="#e6b400" /></svg>
      </TaskApp>
      <TaskApp className="ml-[7px] w-[60px] bg-[#b16a33]" bar="bg-[#ee7718]">
        <svg viewBox="0 0 34 34" className="h-[34px] w-[34px] fill-none">
          <circle cx="17" cy="5" r="5" fill="#7b83eb" /><circle cx="27" cy="6" r="3.500" fill="#5059c9" /><path d="M11 10H31V20C31 26 11 26 11 20Z" fill="#5b5fc7" />
          <path d="M1 7H15V21H1Z" fill="#4b53bc" /><path d="M5 10.500H11M8 10.500V18" stroke="#fff" strokeWidth="2" />
          <circle cx="24" cy="24" r="9" fill="#d5173a" />
          <text x="24" y="28.500" textAnchor="middle" className="fill-white text-[13px] font-bold">9+</text>
        </svg>
      </TaskApp>
      <TaskApp className="ml-[6px] w-[49px]">
        <svg viewBox="0 0 30 30" className="h-[29px] w-[29px]"><circle cx="15" cy="15" r="14" fill="#f9cf4a" /><path d="M15 15L3 8A14 14 0 0 1 27 8Z" fill="#dc4a3b" /><path d="M15 15L3 8A14 14 0 0 0 13 29L19 20Z" fill="#2c9d54" /><path d="M15 1A14 14 0 0 1 27.500 9H15Z" fill="#dc4a3b" /><circle cx="15" cy="15" r="6.800" fill="#fff" /><circle cx="15" cy="15" r="5.300" fill="#4285f4" /></svg>
      </TaskApp>
      <TaskApp className="ml-[7px] w-[59px] bg-[#4c585d]">
        <svg viewBox="0 0 27 28" className="h-[28px] w-[27px] fill-none"><path d="M14 4H26V24H14Z" fill="#fff" /><path d="M14 8H26M14 12H26M14 16H26M14 20H26M20 4V24" stroke="#217346" /><path d="M0 3L16 0V28L0 25Z" fill="#1d7044" /><path d="M5 9L11 19M11 9L5 19" stroke="#fff" strokeWidth="2.200" /></svg>
      </TaskApp>
      <TaskApp className="ml-[2px] w-[60px] bg-[#b16a33]" bar="bg-[#ee7718]">
        <svg viewBox="0 0 28 28" className="h-[28px] w-[28px] fill-none"><circle cx="9" cy="9" r="8.500" fill="#fff" /><circle cx="19" cy="19" r="8.500" fill="#fff" /><circle cx="14" cy="14" r="11.500" fill="#fff" /><circle cx="14" cy="14" r="11" stroke="#1da8e2" /><path d="M19 9C17 5 9 6 9.500 10C10 14 19 13 19 17C19 22 10 22 8.500 18" stroke="#1da8e2" strokeWidth="3.200" /></svg>
      </TaskApp>
      <div className="ml-[4px]"><Tray /></div>
      <div className="ml-[10px] flex w-[71px] flex-col items-center pt-[2px] text-[17px] leading-[25px] text-[#eee]">
        <T className="w-[58px]">2:45 PM</T>
        <T className="w-[71px]">5/10/2021</T>
      </div>
      <svg viewBox="0 0 23 22" className={iconBase + ' ml-[26px] h-[22px] w-[23px]'}><path d="M1 1H21V16H10L6 20V16H1Z" fill="#fff" /><path d="M4 5H18M4 8.500H18M4 12H12" stroke="#333" /><path d="M17 12C22 14 20 20 14 19" stroke="#fff" strokeWidth="3" /></svg>
      <span className="ml-auto h-[52px] w-[6px] border-l border-[#8a9599]" />
    </div>
  );
}

function SharedScreen() {
  return (
    <div className="relative flex w-[1671px] shrink-0 flex-col overflow-hidden font-['Open_Sans']">
      <TitleBar />
      <MenuTabs />
      <Ribbon />
      <FormulaBar />
      <Sheet />
      <SheetTabs />
      <StatusLine />
      <Taskbar />
      <div className="absolute top-[852px] left-[1051px] flex h-[35px] w-[366px] items-center bg-[#0c0a0a] pt-[13px] pl-[17px] text-[18px] text-[#e4e4e4] shadow-[0_0_8px_rgba(0,0,0,0.3)]">
        <T className="w-[234px]">Capgemini - LnD Orientatio...</T>
        <T className="ml-[23px] w-[33px] text-[16px]">44:31</T>
        <span className="mt-[8px] ml-[25px] h-[2px] w-[11px] bg-[#bbb]" />
      </div>
      <svg viewBox="0 0 14 22" className="absolute top-[868px] left-[1210px] h-[22px] w-[14px] fill-white"><path d="M0 0L13 13H8L11 20L8 22L5 14L0 18Z" /></svg>
    </div>
  );
}

function MeetingHeader() {
  return (
    <div className="absolute top-0 left-[27px] flex h-[168px] w-[1623px] overflow-hidden rounded-[22px] bg-black/54 font-[Roboto] text-white">
      <div className="absolute bottom-0 left-0 h-[14px] w-full bg-gradient-to-b from-black/10 to-black/25" />
      <div className="absolute top-0 left-0 h-[154px] w-[8px] bg-black/20" />
      <div className="absolute top-0 right-0 h-[154px] w-[13px] bg-black/15" />
      <div className="relative flex flex-col pt-[37px] pl-[48px]">
        <T className="w-[881px] text-[48px] leading-[54px] font-bold">Capgemini - LnD Orientation - VnV Batch</T>
        <div className="mt-[6px] flex pl-[1px] text-[33.500px] leading-[42px]">
          <T className="w-[82px]">19:18</T>
          <T className="ml-[25px] w-[192px]">76 attendees</T>
        </div>
      </div>
      <svg viewBox="0 0 60 60" className={iconBase + ' relative mt-[54px] ml-auto h-[60px] w-[60px] stroke-white stroke-[4.300]'}>
        <path d="M2.500 57.500L6 44A27.700 27.700 0 1 1 17 54.500Z" strokeLinejoin="round" /><path d="M20 24.500H39M20 35.500H33" strokeLinecap="round" />
      </svg>
      <svg viewBox="0 0 60 58" className={iconBase + ' relative mt-[57px] mr-[42px] ml-[84px] h-[58px] w-[60px] stroke-white stroke-[4.300]'}>
        <circle cx="19.500" cy="13.500" r="11.300" /><circle cx="47" cy="16.500" r="8.300" />
        <path d="M6 35.500H34Q37.500 35.500 37.500 39V41C37.500 60 2.500 60 2.500 41V39Q2.500 35.500 6 35.500Z" /><path d="M42 35.500H54Q57.800 35.500 57.800 39.500C57.800 50 51 54 41 52" />
      </svg>
    </div>
  );
}

function PersonAvatar({ className = '', dim = false }: { className?: string; dim?: boolean }) {
  return (
    <svg viewBox="0 0 163 163" className={'shrink-0 fill-none stroke-[5.200] ' + (dim ? 'stroke-[#d9dbdc] ' : 'stroke-white ') + className}>
      <circle cx="81.500" cy="81.500" r="81.500" className={dim ? 'fill-[#5b8fb1]' : 'fill-[#66a1cc]'} stroke="none" />
      <circle cx="81.500" cy="63.500" r="15.300" />
      <path d="M48.500 94.500H114.500V98C114.500 108 100 113.500 81.500 113.500S48.500 108 48.500 98Z" />
    </svg>
  );
}

function MicOff({ className = '', gap }: { className?: string; gap: string }) {
  return (
    <svg viewBox="0 0 72 72" className={'shrink-0 fill-none ' + className}>
      <rect x="23" y="0" width="26" height="51" rx="13" fill="#fff" />
      <path d="M14 36V38C14 66 58 66 58 38V36M36 60V70" stroke="#fff" strokeWidth="4.500" strokeLinecap="round" />
      <path d="M7 -1L75 67" stroke={gap} strokeWidth="5" />
      <path d="M2 2L70 70" stroke="#fff" strokeWidth="4.500" strokeLinecap="round" />
    </svg>
  );
}

function Participants() {
  return (
    <div className="flex w-[300px] shrink-0 flex-col items-center gap-[6px] overflow-hidden pt-[3px] pr-[3px] pl-[6px] font-[Roboto] text-[36px] leading-[40px] text-white">
      <div className="flex h-[191px] w-[291px] shrink-0 items-center justify-center rounded-[11px] bg-[#272727]">
        <PersonAvatar className="h-[85px] w-[85px]" />
      </div>
      <div className="flex h-[285px] w-[285px] shrink-0 flex-col items-center rounded-[11px] bg-[#393643] pt-[53px]">
        <div className="flex h-[179px] w-[179px] shrink-0 items-center justify-center rounded-full border-[4px] border-[#9ea2f0] bg-[#20222b] shadow-[0_8px_40px_rgba(0,0,0,0.25)]">
          <PersonAvatar className="h-[163px] w-[163px]" />
        </div>
        <T className="ml-[13px] w-[212px]">Padmawar, N</T>
      </div>
      <div className="flex h-[285px] w-[285px] shrink-0 flex-col items-center rounded-[11px] bg-[#272727] pt-[71px]">
        <PersonAvatar dim className="h-[143px] w-[143px]" />
        <div className="mt-[18px] ml-[20px] flex items-center">
          <T className="w-[142px]">Kumar, P</T>
          <MicOff gap="#272727" className="mb-[4px] ml-[12px] h-[30px] w-[30px]" />
        </div>
      </div>
      <div className="flex h-[199px] w-[285px] shrink-0 flex-col items-center overflow-hidden rounded-t-[11px] bg-[#272727] pt-[71px]">
        <PersonAvatar dim className="h-[143px] w-[143px]" />
      </div>
    </div>
  );
}

function CallControls() {
  return (
    <div className="flex w-[228px] shrink-0 flex-col items-center rounded-[6px] bg-[#303030] pt-[24px]">
      <div className="flex h-[180px] w-[180px] shrink-0 items-center justify-center rounded-[21px] bg-[#9c1b38]">
        <svg viewBox="0 0 72 34" className="h-[34px] w-[72px] fill-white">
          <path d="M36 0C56 0 69 6 71.500 16C72.500 21 71 27 69.500 30C68 33 65 33.500 62 33L51 31Q47.500 30 47 26.500L45.500 18Q45.300 16 43 15.500Q36 14 29 15.500Q26.700 16 26.500 18L25 26.500Q24.500 30 21 31L10 33C7 33.500 4 33 2.500 30C1 27-.5 21 .5 16C3 6 16 0 36 0Z" />
        </svg>
      </div>
      <div className="mt-[106px] flex gap-[7px]">
        <span className="h-[17px] w-[17px] rounded-full bg-white" /><span className="h-[17px] w-[17px] rounded-full bg-white" /><span className="h-[17px] w-[17px] rounded-full bg-white" />
      </div>
      <svg viewBox="0 0 72 66" className="mt-[162px] h-[66px] w-[72px] shrink-0 fill-none stroke-white">
        <path d="M9 17H24L41 2Q46 -1 47 4V61Q46 66 41 63L24 48H9Q1 48 1 40V25Q1 17 9 17Z" fill="#fff" stroke="none" />
        <path d="M55 22C59 29 59 37 55 44M62 13C71 26 71 40 62 53" strokeWidth="4.500" strokeLinecap="round" />
      </svg>
      <MicOff gap="#303030" className="mt-[136px] h-[72px] w-[72px]" />
      <svg viewBox="0 0 72 72" className="mt-[132px] h-[72px] w-[72px] shrink-0 fill-white">
        <rect x="0" y="10" width="48" height="52" rx="9" />
        <path d="M53 27L66 16Q70 13 70 18V54Q70 59 66 56L53 45Z" />
        <path d="M7 -1L77 69" stroke="#303030" strokeWidth="5.500" />
        <path d="M2 2L70 70" stroke="#fff" strokeWidth="4.500" strokeLinecap="round" />
      </svg>
    </div>
  );
}

function PhoneStatus() {
  return (
    <div className="flex h-[96px] items-start bg-[#242424] font-[Roboto] text-white">
      <T className="mt-[47px] ml-[70px] w-[72px] text-[37px] leading-[40px]">2:45</T>
      <FaSnapchatGhost className="mt-[50px] ml-[27px] h-[33px] w-[34px]" />
      <FaTwitter className="mt-[49px] ml-[19px] h-[34px] w-[34px]" />
      <MdPhone className="mt-[48px] ml-[16px] h-[36px] w-[36px]" />
      <svg viewBox="0 0 34 32" className="mt-[50px] ml-[17px] h-[32px] w-[34px] fill-white">
        <path d="M8 10C8 3 14 0 20 0H28C33 0 34 4 34 10C34 16 29 18 24 17L17 20L10 22Z" /><ellipse cx="4" cy="17" rx="4" ry="5" /><circle cx="15" cy="27" r="4.500" />
        <path d="M3 31L31 -1" stroke="#242424" strokeWidth="7" /><path d="M4 30L32 1" stroke="#fff" strokeWidth="2.500" />
      </svg>
      <svg viewBox="0 0 32 30" className={iconBase + ' mt-[51px] ml-[1504px] h-[30px] w-[32px] stroke-white'}>
        <rect x="8.500" y="2.500" width="15" height="25" rx="3" strokeWidth="3" />
        <path d="M2 6L4.500 9L1.500 12L4.500 15L1.500 18L4.500 21L2 24M30 6L27.500 9L30.500 12L27.500 15L30.500 18L27.500 21L30 24" strokeWidth="2" />
      </svg>
      <div className="mt-[47px] ml-[16px] flex flex-col items-center font-bold">
        <T className="w-[49px] text-[24px] leading-[22px]">44.0</T>
        <T className="w-[40px] text-[17px] leading-[17px]">KB/S</T>
      </div>
      <div className="mt-[51px] ml-[17px] flex flex-col font-bold">
        <T className="w-[21px] text-[18px] leading-[16px]">Vo</T>
        <T className="w-[22px] text-[19px] leading-[16px]">LTE</T>
      </div>
      <div className="mt-[50px] ml-[14px] flex h-[31px] w-[57px]">
        <svg viewBox="0 0 10 14" className={iconBase + ' mt-[2px] h-[14px] w-[10px] stroke-white stroke-2'}><path d="M1 5L5 1L9 5M1 9L5 13L9 9" /></svg>
        <div className="flex flex-col">
          <T className="ml-[2px] w-[22px] text-[20px] leading-[19px]">4G</T>
          <div className="mt-auto flex items-end gap-[6px] pl-[7px]">
            <span className="h-[9px] w-[5px] rounded-full bg-white" /><span className="h-[12px] w-[5px] rounded-full bg-white" />
          </div>
        </div>
        <div className="ml-[-1px] flex items-end gap-[6px]">
          <span className="ml-[6px] h-[20px] w-[5px] shrink-0 rounded-full bg-white" /><span className="h-[30px] w-[5px] shrink-0 rounded-full bg-white" />
        </div>
      </div>
      <div className="mt-[52px] ml-[18px] flex items-center">
        <div className="flex h-[28px] w-[48px] items-center justify-center rounded-[9px] border-[3px] border-white bg-gradient-to-r from-[#4a4a4a] from-39% to-[#242424] to-40% text-[23px] leading-[22px]"><T className="w-[25px]">39</T></div>
        <span className="h-[9px] w-[2px] rounded-r bg-white" />
      </div>
    </div>
  );
}

export default function App() {
  return (
    <div className="flex h-[1080px] w-[2340px] overflow-hidden bg-black">
      <div className="flex w-[2208px] shrink-0 flex-col bg-[#1d1d1d]">
        <PhoneStatus />
        <div className="flex h-[984px]">
          <div className="relative w-[1680px] shrink-0 pt-[21px] pl-[6px]">
            <SharedScreen />
            <MeetingHeader />
            <div className="absolute top-[917px] left-[18px] flex h-[48px] w-[232px] items-center rounded-[22px] bg-black/50 pt-[7px] pl-[7px] font-[Roboto] text-[36px] leading-[40px] text-white">
              <T className="w-[212px]">Padmawar, N</T>
            </div>
          </div>
          <Participants />
          <CallControls />
        </div>
      </div>
      <div className="flex w-[132px] flex-col items-center pt-[262px]">
        <svg viewBox="0 0 38 42" className={iconBase + ' mr-[3px] h-[42px] w-[38px] stroke-[#444] stroke-[2.500]'}><path d="M3 18.500L32 2Q35 1 35.500 4V37Q35 41 32 39.500L3 23Q0 21 3 18.500Z" /></svg>
        <div className="mt-[218px] h-[36px] w-[36px] rounded-[9px] border-[2.500px] border-[#444]" />
        <div className="mt-[224px] flex w-[36px] flex-col gap-[12px]">
          <span className="h-[3px] bg-[#383838]" /><span className="h-[3px] bg-[#383838]" /><span className="h-[3px] bg-[#383838]" />
        </div>
      </div>
    </div>
  );
}
